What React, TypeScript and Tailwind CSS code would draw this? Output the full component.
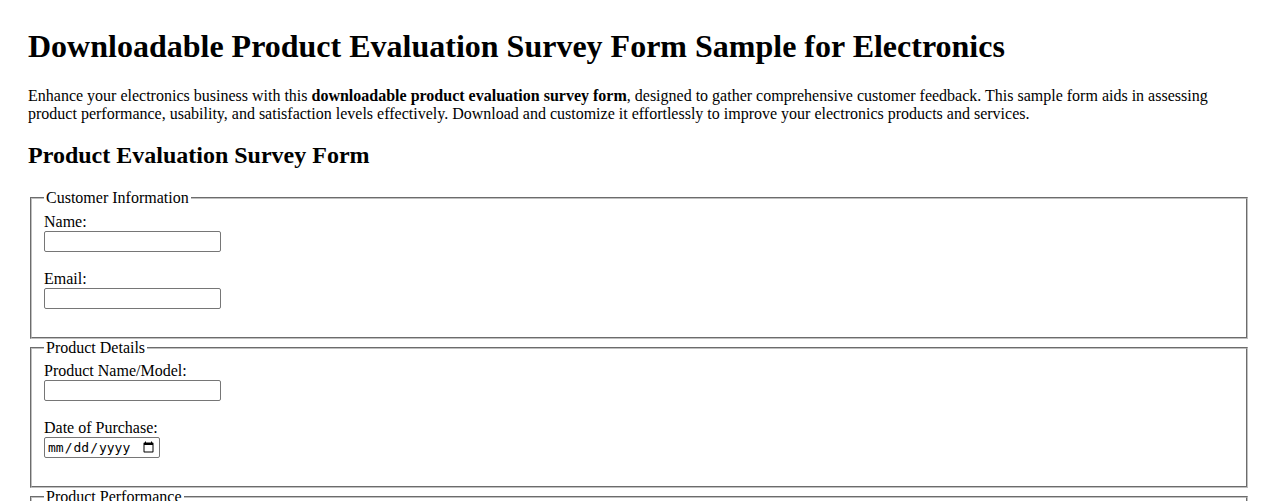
export default function App() {
  return (
    <div className="min-h-screen bg-white px-[28px] pt-[28px] font-['Liberation_Serif',serif] text-[16px] leading-[normal] text-black">
      <h1 className="mb-[21.94px] text-[32px] font-bold leading-[normal]">
        Downloadable Product Evaluation Survey Form Sample for Electronics
      </h1>
      <p className="mb-[16px]">
        Enhance your electronics business with this <strong className="font-bold">downloadable product evaluation survey form</strong>, designed to gather comprehensive customer feedback. This sample form aids in assessing product performance, usability, and satisfaction levels effectively. Download and customize it effortlessly to improve your electronics products and services.
      </p>
      <h2 className="mt-[19.42px] mb-[19.92px] text-[24px] font-bold leading-[normal]">Product Evaluation Survey Form</h2>

      <form>
        {/* Информация о клиенте */}
        <fieldset className="mx-[2px] border-2 border-[#c0c0c0] [border-style:groove] px-[12px] pt-[5.6px] pb-[10px]">
          <legend className="px-[2px]">Customer Information</legend>
          <label className="block">Name:</label>
          <input type="text" className="mb-[18px] block h-[21px] w-[177px] rounded-[2px] border border-[#767676] px-[2px] font-['Liberation_Sans',sans-serif] text-[13.33px]" />
          <label className="block">Email:</label>
          <input type="email" className="mb-[18px] block h-[21px] w-[177px] rounded-[2px] border border-[#767676] px-[2px] font-['Liberation_Sans',sans-serif] text-[13.33px]" />
        </fieldset>

        {/* Детали продукта */}
        <fieldset className="mx-[2px] border-2 border-[#c0c0c0] [border-style:groove] px-[12px] pt-[5.6px] pb-[10px]">
          <legend className="px-[2px]">Product Details</legend>
          <label className="block">Product Name/Model:</label>
          <input type="text" className="mb-[18px] block h-[21px] w-[177px] rounded-[2px] border border-[#767676] px-[2px] font-['Liberation_Sans',sans-serif] text-[13.33px]" />
          <label className="block">Date of Purchase:</label>
          <input type="date" className="mb-[18px] block h-[21px] w-[116px] rounded-[2px] border border-[#767676] px-[2px] font-['DejaVu_Sans_Mono',monospace] text-[13px]" />
        </fieldset>

        <fieldset className="mx-[2px] border-2 border-[#c0c0c0] [border-style:groove] px-[12px] pt-[5.6px] pb-[10px]">
          <legend className="px-[2px]">Product Performance</legend>
          <label className="block">Overall Performance:</label>
          <input type="text" className="mb-[18px] block h-[21px] w-[177px] rounded-[2px] border border-[#767676] px-[2px]" />
        </fieldset>
      </form>
    </div>
  );
}
